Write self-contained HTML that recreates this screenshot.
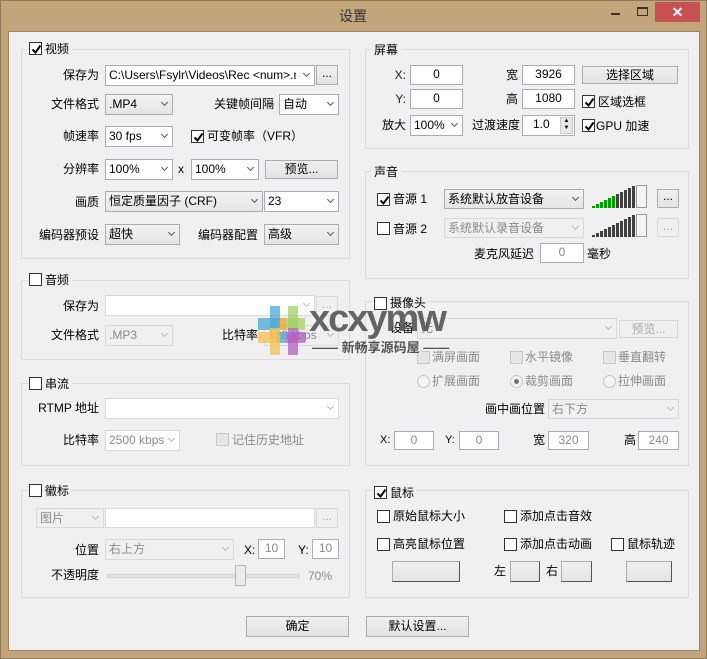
<!DOCTYPE html>
<html><head><meta charset="utf-8"><style>
*{box-sizing:border-box;margin:0;padding:0}
body{width:707px;height:659px;position:relative;overflow:hidden;background:#fff;font-family:"Liberation Sans","Noto Sans CJK SC",sans-serif;font-size:12px;color:#000}
div,span{position:absolute}
.frame{left:0;top:0;width:707px;height:659px;background:#c2a57a;border:1px solid #8f7a58}
.client{left:8px;top:31px;width:692px;height:620px;background:#f0f0f0;border:1px solid #9c8660}
.g{border:1px solid #dcdcdc}
.l{white-space:nowrap;line-height:14px;font-size:12px}
.r{text-align:right}
.cb{background:#fff;border:1px solid #abadb3;padding-left:3px;line-height:18px;white-space:nowrap;overflow:hidden}
.gr{background:linear-gradient(#f2f2f2,#e5e5e5);border-color:#acacac}
.dis{background:#f0f0f0;border-color:#d9d9d9;color:#8a8a8a}
.dw{background:#fff;border-color:#d9d9d9;color:#8a8a8a}
.cb .a{right:5px;top:5px;width:5px;height:5px;border-right:1.5px solid #555;border-bottom:1.5px solid #555;transform:rotate(45deg)}
.dis .a,.dw .a{border-color:#bbb}
.ed{background:#fff;border:1px solid #abadb3;text-align:center;line-height:17px}
.btn{background:linear-gradient(#f0f0f0,#e3e3e3);border:1px solid #acacac;text-align:center;line-height:17px}
.bd{background:#f0f0f0;border:1px solid #d9d9d9;color:#aaa;text-align:center;line-height:14px}
.ck{width:13px;height:13px;background:#fff;border:1px solid #333}
.ckd{background:#e6e6e6;border-color:#c8c8c8}
.ck svg{position:absolute;left:1px;top:1px}
.rd{width:13px;height:13px;border-radius:50%;border:1px solid #c8c8c8;background:#f4f4f4}
.gtxt{color:#8a8a8a}
</style></head><body>
<div class="frame"></div>
<span class="l" style="left:339px;top:8px;font-size:14px;line-height:16px;color:#333">设置</span>
<div style="left:611px;top:13px;width:9px;height:2px;background:#333"></div>
<div style="left:637px;top:7px;width:11px;height:9px;border:1px solid #333;border-top-width:2px"></div>
<div style="left:655px;top:2px;width:45px;height:20px;background:#c75050;color:#fff;text-align:center;font-size:14px;line-height:20px;font-weight:bold">✕</div>
<div class="client"></div>

<div class="g" style="left:21px;top:49px;width:329px;height:210px"></div>
<div class="g" style="left:21px;top:280px;width:329px;height:80px"></div>
<div class="g" style="left:21px;top:383px;width:329px;height:83px"></div>
<div class="g" style="left:21px;top:490px;width:329px;height:108px"></div>
<div class="g" style="left:365px;top:49px;width:324px;height:100px"></div>
<div class="g" style="left:365px;top:171px;width:324px;height:108px"></div>
<div class="g" style="left:365px;top:301px;width:324px;height:165px"></div>
<div class="g" style="left:365px;top:490px;width:324px;height:108px"></div>

<div style="left:28px;top:42px;width:44px;height:14px;background:#f0f0f0"></div>
<div class="ck" style="left:29px;top:42px"><svg width="11" height="11"><path d="M1.5 5.5 L4.5 8.5 L9.5 1.5" stroke="#000" stroke-width="2" fill="none"/></svg></div>
<span class="l" style="left:45px;top:42px">视频</span>
<div style="left:28px;top:273px;width:44px;height:14px;background:#f0f0f0"></div>
<div class="ck" style="left:29px;top:273px"></div><span class="l" style="left:45px;top:273px">音频</span>
<div style="left:28px;top:376px;width:44px;height:14px;background:#f0f0f0"></div>
<div class="ck" style="left:29px;top:377px"></div><span class="l" style="left:45px;top:377px">串流</span>
<div style="left:28px;top:483px;width:44px;height:14px;background:#f0f0f0"></div>
<div class="ck" style="left:29px;top:484px"></div><span class="l" style="left:45px;top:484px">徽标</span>

<div style="left:372px;top:42px;width:30px;height:14px;background:#f0f0f0"></div>
<span class="l" style="left:374px;top:43px">屏幕</span>
<div style="left:372px;top:164px;width:30px;height:14px;background:#f0f0f0"></div>
<span class="l" style="left:374px;top:165px">声音</span>
<div style="left:372px;top:294px;width:56px;height:14px;background:#f0f0f0"></div>
<div class="ck" style="left:374px;top:297px"></div><span class="l" style="left:390px;top:296px">摄像头</span>
<div style="left:372px;top:483px;width:44px;height:14px;background:#f0f0f0"></div>
<div class="ck" style="left:374px;top:486px"><svg width="11" height="11"><path d="M1.5 5.5 L4.5 8.5 L9.5 1.5" stroke="#000" stroke-width="2" fill="none"/></svg></div>
<span class="l" style="left:390px;top:486px">鼠标</span>

<span class="l r" style="right:608px;top:68px">保存为</span>
<div class="cb" style="left:105px;top:65px;width:210px;height:21px">C:\Users\Fsylr\Videos\Rec &lt;num&gt;.mp4<span style="right:0;top:0;width:18px;height:19px;background:#fff"></span><span class="a"></span></div>
<div class="btn" style="left:316px;top:65px;width:22px;height:20px;line-height:14px">...</div>

<span class="l r" style="right:608px;top:97px">文件格式</span>
<div class="cb gr" style="left:105px;top:94px;width:68px;height:21px">.MP4<span class="a"></span></div>
<span class="l r" style="right:433px;top:97px">关键帧间隔</span>
<div class="cb" style="left:279px;top:94px;width:60px;height:21px">自动<span class="a"></span></div>

<span class="l r" style="right:608px;top:129px">帧速率</span>
<div class="cb" style="left:105px;top:126px;width:68px;height:21px">30 fps<span class="a"></span></div>
<div class="ck" style="left:191px;top:130px"><svg width="11" height="11"><path d="M1.5 5.5 L4.5 8.5 L9.5 1.5" stroke="#000" stroke-width="2" fill="none"/></svg></div>
<span class="l" style="left:207px;top:129px">可变帧率（VFR）</span>

<span class="l r" style="right:608px;top:162px">分辨率</span>
<div class="cb" style="left:105px;top:159px;width:68px;height:21px">100%<span class="a"></span></div>
<span class="l" style="left:178px;top:162px">x</span>
<div class="cb" style="left:191px;top:159px;width:68px;height:21px">100%<span class="a"></span></div>
<div class="btn" style="left:265px;top:160px;width:73px;height:19px">预览...</div>

<span class="l r" style="right:608px;top:195px">画质</span>
<div class="cb gr" style="left:105px;top:191px;width:158px;height:21px">恒定质量因子 (CRF)<span class="a"></span></div>
<div class="cb" style="left:264px;top:191px;width:75px;height:21px">23<span class="a"></span></div>

<span class="l r" style="right:608px;top:228px">编码器预设</span>
<div class="cb gr" style="left:105px;top:224px;width:75px;height:21px">超快<span class="a"></span></div>
<span class="l r" style="right:449px;top:228px">编码器配置</span>
<div class="cb gr" style="left:264px;top:224px;width:75px;height:21px">高级<span class="a"></span></div>

<span class="l r" style="right:608px;top:299px">保存为</span>
<div class="cb dw" style="left:105px;top:295px;width:210px;height:21px"><span class="a"></span></div>
<div class="bd" style="left:316px;top:296px;width:22px;height:20px">...</div>
<span class="l r" style="right:608px;top:328px">文件格式</span>
<div class="cb dis" style="left:105px;top:325px;width:68px;height:21px">.MP3<span class="a"></span></div>
<span class="l r" style="right:449px;top:328px">比特率</span>
<div class="cb dis" style="left:264px;top:325px;width:75px;height:21px">128 kbps<span class="a"></span></div>

<span class="l r" style="right:608px;top:401px">RTMP 地址</span>
<div class="cb" style="left:105px;top:398px;width:234px;height:21px;border-color:#d9d9d9"><span class="a" style="border-color:#bbb"></span></div>
<span class="l r" style="right:608px;top:433px">比特率</span>
<div class="cb dw" style="left:105px;top:430px;width:75px;height:21px">2500 kbps<span class="a"></span></div>
<div class="ck ckd" style="left:216px;top:433px"></div>
<span class="l gtxt" style="left:232px;top:433px">记住历史地址</span>

<div class="cb dis" style="left:36px;top:508px;width:68px;height:20px">图片<span class="a"></span></div>
<div class="cb dw" style="left:105px;top:508px;width:210px;height:20px"></div>
<div class="bd" style="left:316px;top:508px;width:22px;height:20px">...</div>
<span class="l r" style="right:608px;top:543px">位置</span>
<div class="cb dis" style="left:105px;top:539px;width:129px;height:21px">右上方<span class="a"></span></div>
<span class="l" style="left:244px;top:543px">X:</span>
<div class="ed dis" style="left:258px;top:539px;width:27px;height:20px;color:#8a8a8a">10</div>
<span class="l" style="left:298px;top:543px">Y:</span>
<div class="ed dis" style="left:312px;top:539px;width:27px;height:20px;color:#8a8a8a">10</div>
<span class="l r" style="right:608px;top:568px">不透明度</span>
<div style="left:107px;top:574px;width:193px;height:4px;background:#e6e6e6;border:1px solid #d6d6d6"></div>
<div style="left:235px;top:565px;width:11px;height:21px;background:#ececec;border:1px solid #b5b5b5"></div>
<span class="l gtxt" style="left:308px;top:569px">70%</span>

<span class="l r" style="right:301px;top:68px;color:#222">X:</span>
<div class="ed" style="left:410px;top:65px;width:53px;height:20px">0</div>
<span class="l" style="left:506px;top:68px">宽</span>
<div class="ed" style="left:522px;top:65px;width:53px;height:20px">3926</div>
<div class="btn" style="left:582px;top:66px;width:96px;height:18px;line-height:16px">选择区域</div>
<span class="l r" style="right:301px;top:92px;color:#222">Y:</span>
<div class="ed" style="left:410px;top:89px;width:53px;height:20px">0</div>
<span class="l" style="left:506px;top:92px">高</span>
<div class="ed" style="left:522px;top:89px;width:53px;height:20px">1080</div>
<div class="ck" style="left:582px;top:95px"><svg width="11" height="11"><path d="M1.5 5.5 L4.5 8.5 L9.5 1.5" stroke="#000" stroke-width="2" fill="none"/></svg></div>
<span class="l" style="left:598px;top:95px">区域选框</span>
<span class="l" style="left:382px;top:118px">放大</span>
<div class="cb" style="left:410px;top:115px;width:53px;height:21px">100%<span class="a"></span></div>
<span class="l" style="left:472px;top:118px">过渡速度</span>
<div class="ed" style="left:522px;top:115px;width:53px;height:21px;text-align:left;padding-left:10px">1.0<span style="right:1px;top:1px;width:13px;height:17px;background:#e8e8e8;border:1px solid #c8c8c8;font-size:6px;line-height:7px;text-align:center">▲<br>▼</span></div>
<div class="ck" style="left:582px;top:119px"><svg width="11" height="11"><path d="M1.5 5.5 L4.5 8.5 L9.5 1.5" stroke="#000" stroke-width="2" fill="none"/></svg></div>
<span class="l" style="left:596px;top:119px">GPU 加速</span>

<div class="ck" style="left:377px;top:193px"><svg width="11" height="11"><path d="M1.5 5.5 L4.5 8.5 L9.5 1.5" stroke="#000" stroke-width="2" fill="none"/></svg></div>
<span class="l" style="left:393px;top:192px">音源 1</span>
<div class="cb gr" style="left:444px;top:189px;width:140px;height:20px">系统默认放音设备<span class="a"></span></div>
<svg style="position:absolute;left:592px;top:185px" width="56" height="25">
<g fill="#00a000"><rect x="0" y="21" width="3" height="2"/><rect x="4" y="19" width="3" height="4"/><rect x="8" y="17" width="3" height="6"/><rect x="12" y="15" width="3" height="8"/><rect x="16" y="13" width="3" height="10"/><rect x="20" y="11" width="3" height="12"/></g>
<g fill="#404040"><rect x="24" y="9" width="3" height="14"/><rect x="28" y="7" width="3" height="16"/><rect x="32" y="5" width="3" height="18"/><rect x="36" y="3" width="3" height="20"/><rect x="40" y="1" width="3" height="22"/></g>
<rect x="44.5" y="0.5" width="10" height="22" fill="#f4f4f4" stroke="#999"/></svg>
<div class="btn" style="left:657px;top:189px;width:22px;height:19px;line-height:13px">...</div>
<div class="ck" style="left:377px;top:222px"></div>
<span class="l" style="left:393px;top:222px">音源 2</span>
<div class="cb dis" style="left:444px;top:218px;width:140px;height:20px">系统默认录音设备<span class="a"></span></div>
<svg style="position:absolute;left:592px;top:214px" width="56" height="25">
<g fill="#404040"><rect x="0" y="21" width="3" height="2"/><rect x="4" y="19" width="3" height="4"/><rect x="8" y="17" width="3" height="6"/><rect x="12" y="15" width="3" height="8"/><rect x="16" y="13" width="3" height="10"/><rect x="20" y="11" width="3" height="12"/><rect x="24" y="9" width="3" height="14"/><rect x="28" y="7" width="3" height="16"/><rect x="32" y="5" width="3" height="18"/><rect x="36" y="3" width="3" height="20"/><rect x="40" y="1" width="3" height="22"/></g>
<rect x="44.5" y="0.5" width="10" height="22" fill="#f4f4f4" stroke="#999"/></svg>
<div class="bd" style="left:657px;top:218px;width:22px;height:19px">...</div>
<span class="l" style="left:474px;top:247px">麦克风延迟</span>
<div class="ed dis" style="left:540px;top:243px;width:44px;height:20px;color:#8a8a8a">0</div>
<span class="l" style="left:587px;top:247px">毫秒</span>

<span class="l" style="left:390px;top:321px">设备</span>
<div class="cb dis" style="left:417px;top:318px;width:200px;height:21px">无<span class="a"></span></div>
<div class="bd" style="left:619px;top:320px;width:59px;height:18px;line-height:16px">预览...</div>
<div class="ck ckd" style="left:417px;top:351px"></div><span class="l gtxt" style="left:432px;top:350px">满屏画面</span>
<div class="ck ckd" style="left:510px;top:351px"></div><span class="l gtxt" style="left:525px;top:350px">水平镜像</span>
<div class="ck ckd" style="left:603px;top:351px"></div><span class="l gtxt" style="left:618px;top:350px">垂直翻转</span>
<div class="rd" style="left:417px;top:375px"></div><span class="l gtxt" style="left:432px;top:374px">扩展画面</span>
<div class="rd" style="left:510px;top:375px"><span style="left:3px;top:3px;width:5px;height:5px;border-radius:50%;background:#777"></span></div><span class="l gtxt" style="left:525px;top:374px">裁剪画面</span>
<div class="rd" style="left:603px;top:375px"></div><span class="l gtxt" style="left:618px;top:374px">拉伸画面</span>
<span class="l" style="left:485px;top:402px">画中画位置</span>
<div class="cb dis" style="left:548px;top:399px;width:131px;height:20px">右下方<span class="a"></span></div>
<span class="l" style="left:380px;top:433px;font-size:11px">X:</span>
<div class="ed dis" style="left:394px;top:431px;width:40px;height:19px;color:#8a8a8a">0</div>
<span class="l" style="left:445px;top:433px;font-size:11px">Y:</span>
<div class="ed dis" style="left:459px;top:431px;width:40px;height:19px;color:#8a8a8a">0</div>
<span class="l" style="left:533px;top:433px">宽</span>
<div class="ed dis" style="left:548px;top:431px;width:41px;height:19px;color:#8a8a8a">320</div>
<span class="l" style="left:624px;top:433px">高</span>
<div class="ed dis" style="left:638px;top:431px;width:41px;height:19px;color:#8a8a8a">240</div>

<div class="ck" style="left:377px;top:510px"></div><span class="l" style="left:393px;top:509px">原始鼠标大小</span>
<div class="ck" style="left:504px;top:510px"></div><span class="l" style="left:520px;top:509px">添加点击音效</span>
<div class="ck" style="left:377px;top:538px"></div><span class="l" style="left:393px;top:537px">高亮鼠标位置</span>
<div class="ck" style="left:504px;top:538px"></div><span class="l" style="left:520px;top:537px">添加点击动画</span>
<div class="ck" style="left:611px;top:538px"></div><span class="l" style="left:627px;top:537px">鼠标轨迹</span>
<div class="btn" style="left:392px;top:561px;width:68px;height:21px;border-right-color:#555;border-bottom-color:#555"></div>
<span class="l" style="left:494px;top:564px">左</span>
<div class="btn" style="left:510px;top:561px;width:30px;height:21px;border-right-color:#555;border-bottom-color:#555"></div>
<span class="l" style="left:546px;top:564px">右</span>
<div class="btn" style="left:561px;top:561px;width:31px;height:21px;border-right-color:#555;border-bottom-color:#555"></div>
<div class="btn" style="left:626px;top:561px;width:46px;height:21px;border-right-color:#555;border-bottom-color:#555"></div>

<div class="btn" style="left:246px;top:616px;width:103px;height:21px;line-height:19px">确定</div>
<div class="btn" style="left:366px;top:616px;width:103px;height:21px;line-height:19px">默认设置...</div>

<div style="left:258px;top:318px;width:47px;height:12px;opacity:.75;background:linear-gradient(90deg,#4aa8d8 0 40%,#f0a020 40% 60%,#a0d060 60%)"></div>
<div style="left:258px;top:332px;width:47px;height:11px;opacity:.75;background:linear-gradient(90deg,#f8c050 0 40%,#4aa8d8 40% 60%,#b060c0 60%)"></div>
<div style="left:270px;top:306px;width:10px;height:49px;opacity:.75;background:linear-gradient(#4aa8d8 0 45%,#f8c050 45%)"></div>
<div style="left:288px;top:306px;width:10px;height:49px;opacity:.75;background:linear-gradient(#a0d060 0 45%,#b060c0 45%)"></div>
<span class="l" style="left:309px;top:299px;font-size:38px;line-height:40px;font-weight:bold;color:#555;letter-spacing:-2px;opacity:.9">xcxymw</span>
<span class="l" style="left:312px;top:341px;font-size:13px;font-weight:bold;color:#555">—— 新畅享源码屋 ——</span>
</body></html>
